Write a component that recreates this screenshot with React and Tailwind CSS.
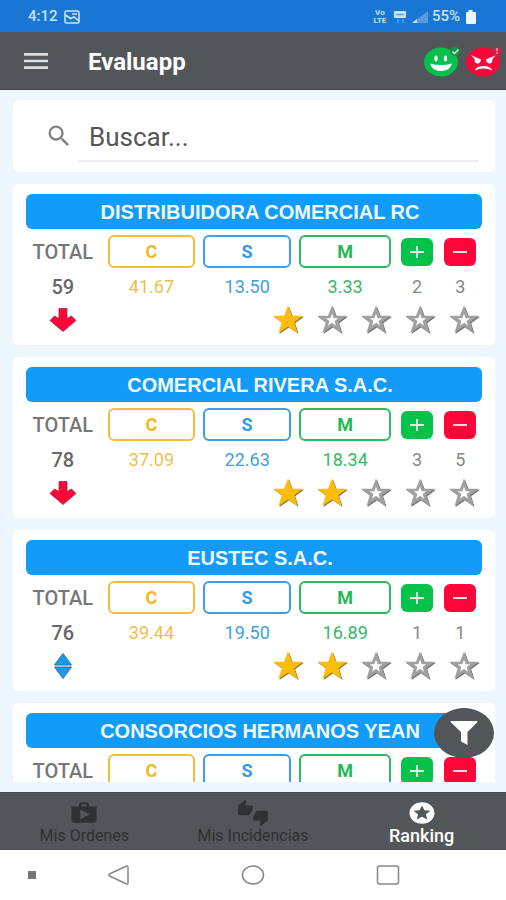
import { useState } from "react";
import { MdShop, MdThumbsUpDown, MdStars, MdMenu, MdSearch } from "react-icons/md";

const companies = [
    { id: 1, name: "DISTRIBUIDORA COMERCIAL RC", total: 59, c: "41.67", s: "13.50", m: "3.33", plus: 2, minus: 3, stars: 1, trend: "down" },
    { id: 2, name: "COMERCIAL RIVERA S.A.C.", total: 78, c: "37.09", s: "22.63", m: "18.34", plus: 3, minus: 5, stars: 2, trend: "down" },
    { id: 3, name: "EUSTEC S.A.C.", total: 76, c: "39.44", s: "19.50", m: "16.89", plus: 1, minus: 1, stars: 2, trend: "same" },
    { id: 4, name: "CONSORCIOS HERMANOS YEAN" },
];

const tabs = [
    { id: "ordenes", label: "Mis Ordenes", icon: MdShop },
    { id: "incidencias", label: "Mis Incidencias", icon: MdThumbsUpDown },
    { id: "ranking", label: "Ranking", icon: MdStars },
];

function StatusBar() {
    return (
        <div className="h-8 shrink-0 bg-[#1976d2] px-7 flex items-center justify-between text-[#c8e3fb] text-sm font-medium">
            <div className="flex items-center gap-1.5 pt-0.5">
                <span className="text-[15px]">4:12</span>
                <svg className="w-4 h-3.5" viewBox="0 0 16 14" fill="none" stroke="currentColor" strokeWidth="1.6">
                    <rect x="1" y="1" width="14" height="12" rx="1.5" />
                    <path d="M1.5 5l5 3.5L10 7l5 4M8 4h5" />
                </svg>
            </div>
            <div className="flex items-center gap-1 pt-0.5">
                <div className="w-4 text-center text-[8px] leading-2 font-bold">
                    <div>Vo</div>
                    <div>LTE</div>
                </div>
                <svg className="w-4 h-4" viewBox="0 0 16 16" fill="currentColor">
                    <rect x="2" y="2" width="12" height="7" rx="1" />
                    <path d="M4 5.500h8" stroke="#1976d2" strokeWidth="1.500" opacity=".6" />
                    <path d="M6 10v4M11 10v4" stroke="currentColor" strokeWidth="1.2" opacity=".5" />
                </svg>
                <svg className="w-4 h-3.5" viewBox="0 0 16 14" fill="currentColor">
                    <path d="M0 13L16 1v12z" opacity=".35" />
                    <path d="M0 13l5-4v4z" />
                </svg>
                <span className="text-[15px]">55%</span>
                <svg className="w-3.5 h-3.5" viewBox="0 0 14 14" fill="#eef7ff">
                    <path d="M4.500 0h4v2H11q1 0 1 1v10q0 1-1 1H3q-1 0-1-1V3q0-1 1-1h1.500z" />
                </svg>
            </div>
        </div>
    );
}

function HappyIcon() {
    return (
        <svg className="w-9 h-8" viewBox="0 0 36 32">
            <ellipse cx="17" cy="17" rx="17" ry="14.500" fill="#05c04b" />
            <ellipse cx="12" cy="13.500" rx="1.700" ry="3" fill="#fff" />
            <ellipse cx="21.500" cy="13.500" rx="1.700" ry="3" fill="#fff" />
            <path d="M6 18.500q11 3 22 0-2 7.500-11 7.500T6 18.500z" fill="#fff" />
            <ellipse cx="31" cy="6.500" rx="5" ry="4.500" fill="#10964a" />
            <path d="M28.500 6.500l2 2 4-4" stroke="#cfeeda" strokeWidth="1.500" fill="none" />
        </svg>
    );
}

function AngryIcon() {
    return (
        <svg className="w-9 h-8" viewBox="0 0 36 32">
            <ellipse cx="17" cy="17" rx="17" ry="14.500" fill="#ff053a" />
            <path d="M5 10l10 4.500q-.5 4-3.500 4T8.500 14z" fill="#fff" />
            <path d="M30 10l-10 4.500q.5 4 3.500 4t3-4.500z" fill="#fff" />
            <path d="M9 25.500q1-4.500 8.500-4.500t8.500 4.500q-4-2-8.500-2T9 25.500z" fill="#fff" />
            <ellipse cx="31" cy="6.500" rx="5" ry="4.500" fill="#c8234c" />
            <path d="M31 3v3.500M31 7.500v1.500" stroke="#ff9aae" strokeWidth="1.500" />
        </svg>
    );
}

function Star({ filled }) {
    return (
        <svg className="w-8 h-8" viewBox="0 0 32 32" aria-hidden="true">
            <path
                d="M17 2.500l4 10.200h11l-8.800 6.500 3.400 10.800L17 23.500 7.400 30l3.400-10.800L2 12.700h11z"
                fill={filled ? "#8f7a35" : "#757575"}
            />
            <path
                d="M16 1.500l4 10.200h11l-8.800 6.500 3.400 10.800L16 22.500 6.400 29l3.400-10.800L1 11.700h11z"
                fill={filled ? "#fbbc0c" : "#a0a0a0"}
            />
            {!filled && <path d="M16 9.500l1.700 4.700h4.600l-3.700 2.900 1.400 4.600-4-2.900-4 2.900 1.400-4.600-3.700-2.900h4.600z" fill="#fff" />}
        </svg>
    );
}

function Trend({ trend }) {
    if (trend === "down") {
        return (
            <svg className="w-7 h-6" viewBox="0 0 28 24" aria-label="Baja">
                <path d="M10 .5h8v10l4.500-2.500 4.500 4.500L14 23.500 1 12.500 5.500 8l4.500 2.500z" fill="#ff053a" stroke="#9c2744" strokeWidth=".8" />
            </svg>
        );
    }
    if (trend === "same") {
        return (
            <svg className="w-7 h-7" viewBox="0 0 28 28" aria-label="Igual">
                <path d="M14 1.500l8.500 11.500h-17zM14 26.500L22.500 15h-17z" fill="#129bf4" stroke="#45708f" strokeWidth="1" />
            </svg>
        );
    }
    return null;
}

function CompanyCard({ company }) {
    return (
        <article className="shrink-0 bg-white rounded-md pt-2.5 pb-[9px] px-[13px]">
            <h2 className="h-[35px] pl-3 rounded-md bg-[#129bf9] text-[#f0faff] flex items-center justify-center font-['Liberation_Sans',sans-serif] text-xl font-bold">
                {company.name}
            </h2>
            <table className="w-full table-fixed text-center text-lg">
                <colgroup>
                    <col className="w-[17%]" />
                    <col className="w-[21%]" />
                    <col className="w-[21%]" />
                    <col className="w-[22%]" />
                    <col />
                    <col />
                </colgroup>
                <thead>
                    <tr>
                        <th className="pt-1.5 pb-0 pl-0 pr-1 font-medium text-xl text-[#777]">TOTAL</th>
                        <th className="pt-1.5 px-1">
                            <span className="h-[33px] flex items-center justify-center rounded-md border-2 border-[#f2be3a] text-[#f2b81f]">C</span>
                        </th>
                        <th className="pt-1.5 px-1">
                            <span className="h-[33px] flex items-center justify-center rounded-md border-2 border-[#3a9fe8] text-[#2f9bea]">S</span>
                        </th>
                        <th className="pt-1.5 px-1">
                            <span className="h-[33px] flex items-center justify-center rounded-md border-2 border-[#2dbb60] text-[#1fba55]">M</span>
                        </th>
                        <th className="pt-1.5 px-0">
                            <span className="mx-auto w-8 h-7 flex items-center justify-center rounded-md bg-[#05c24b]">
                                <svg className="w-3.5 h-3.5" viewBox="0 0 14 14" stroke="#d9f8e4" strokeWidth="2" role="img" aria-label="Positivas">
                                    <path d="M0 7h14M7 1v12" />
                                </svg>
                            </span>
                        </th>
                        <th className="pt-1.5 px-0">
                            <span className="mx-auto w-8 h-7 flex items-center justify-center rounded-md bg-[#ff053a]">
                                <svg className="w-3.5 h-3.5" viewBox="0 0 14 14" stroke="#ffdbe2" strokeWidth="2" role="img" aria-label="Negativas">
                                    <path d="M0 7h14" />
                                </svg>
                            </span>
                        </th>
                    </tr>
                </thead>
                <tbody>
                    <tr className="h-9">
                        <td className="pt-0.5 pr-1 font-medium text-xl text-[#666]">{company.total}</td>
                        <td className="pt-0.5 text-[#ecc04c]">{company.c}</td>
                        <td className="pt-0.5 text-[#3f9fdf]">{company.s}</td>
                        <td className="pt-0.5 text-[#35b863]">{company.m}</td>
                        <td className="pt-0.5 text-[#888]">{company.plus}</td>
                        <td className="pt-0.5 text-[#888]">{company.minus}</td>
                    </tr>
                </tbody>
            </table>
            <div className="h-8 pr-0.5 flex items-center justify-between">
                <div className="w-[17%] pr-1 flex justify-center">
                    <Trend trend={company.trend} />
                </div>
                <div className="flex gap-3" role="img" aria-label={`${company.stars ?? 0} de 5 estrellas`}>
                    {[1, 2, 3, 4, 5].map((n) => (
                        <Star key={n} filled={n <= company.stars} />
                    ))}
                </div>
            </div>
        </article>
    );
}

export default function App() {
    const [search, setSearch] = useState("");
    const [activeTab, setActiveTab] = useState("ranking");

    const visible = companies.filter((c) => c.name.toLowerCase().includes(search.toLowerCase()));

    return (
        <div className="h-screen flex flex-col bg-[#eef6ff] font-[Roboto,sans-serif]">
            <StatusBar />

            {/* Header */}
            <header className="h-[58px] shrink-0 bg-[#535659] border-b border-[#47494c] flex items-center pl-5 pr-1">
                <button aria-label="Menú" className="text-[#dedede]">
                    <MdMenu className="w-8 h-8" preserveAspectRatio="none" />
                </button>
                <h1 className="ml-9 pt-0.5 flex-1 text-2xl font-bold text-white">Evaluapp</h1>
                <div className="flex gap-1.5">
                    <button aria-label="Evaluaciones positivas"><HappyIcon /></button>
                    <button aria-label="Evaluaciones negativas"><AngryIcon /></button>
                </div>
            </header>

            {/* Ranking list */}
            <div className="relative flex-1 min-h-0 flex flex-col">
                <main className="flex-1 min-h-0 my-2.5 ml-[13px] mr-[11px] flex flex-col gap-3 overflow-y-auto [scrollbar-width:none]">
                    <label className="h-[72px] shrink-0 bg-white rounded-md flex items-center pl-8 pr-4">
                        <MdSearch className="w-7 h-7 mr-1.5 text-[#808080]" />
                        <input
                            type="text"
                            aria-label="Buscar"
                            placeholder="Buscar..."
                            value={search}
                            onChange={(e) => setSearch(e.target.value)}
                            className="flex-1 min-w-0 h-12 mt-1 px-2.5 border-b-2 border-[#ececec] text-[26px] text-[#555] placeholder:text-[#555] outline-none"
                        />
                    </label>
                    {visible.map((company) => (
                        <CompanyCard key={company.id} company={company} />
                    ))}
                </main>
                <button
                    aria-label="Filtrar"
                    className="absolute right-3 bottom-[34px] w-[60px] h-[50px] rounded-[50%] bg-[#535659] flex items-center justify-center"
                >
                    <svg className="w-7 h-6" viewBox="0 0 28 24" fill="#fff">
                        <path d="M1 0h26q1 0 0 1.500L17.500 11v13L11 20.500V11L1 1.500Q0 0 1 0z" />
                    </svg>
                </button>
            </div>

            {/* Bottom tabs */}
            <nav className="h-[58px] shrink-0 bg-[#535659] border-y border-[#47494c] grid grid-cols-3">
                {tabs.map(({ id, label, icon: Icon }) => (
                    <button
                        key={id}
                        onClick={() => setActiveTab(id)}
                        className={`pt-1 flex flex-col items-center justify-center ${activeTab === id ? "text-white" : "text-[#2f3133]"}`}
                    >
                        <Icon className="w-[30px] h-[26px]" preserveAspectRatio="none" />
                        <span className={activeTab === id ? "text-lg leading-5 font-medium" : "text-base leading-5"}>{label}</span>
                    </button>
                ))}
            </nav>

            {/* System navigation */}
            <div className="h-[50px] shrink-0 bg-white flex items-center pr-[51px] text-[#888]">
                <div className="w-[52px] pl-7">
                    <div className="w-2 h-2 bg-[#777]" />
                </div>
                <button aria-label="Atrás" className="flex-1 flex justify-center">
                    <svg className="w-6 h-5" viewBox="0 0 24 20" fill="none" stroke="currentColor" strokeWidth="1.500" strokeLinejoin="round">
                        <path d="M2.500 9L19 1.200q2-.7 2 1v15.600q0 1.700-2 1L2.500 11q-1.500-1 0-2z" />
                    </svg>
                </button>
                <button aria-label="Inicio" className="flex-1 flex justify-center">
                    <svg className="w-6 h-5" viewBox="0 0 24 20" fill="none" stroke="currentColor" strokeWidth="1.500">
                        <ellipse cx="12" cy="10" rx="10.500" ry="9" />
                    </svg>
                </button>
                <button aria-label="Recientes" className="flex-1 flex justify-center">
                    <svg className="w-6 h-5" viewBox="0 0 24 20" fill="none" stroke="currentColor" strokeWidth="1.500">
                        <rect x="1.500" y="1" width="21" height="18" rx="2" />
                    </svg>
                </button>
            </div>
        </div>
    );
}
